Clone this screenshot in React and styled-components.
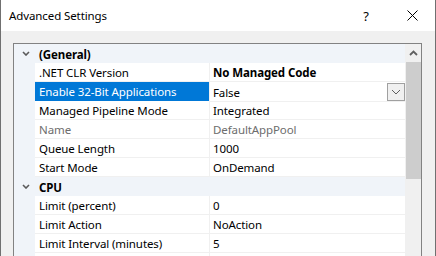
import React from "react";
import styled, { createGlobalStyle } from "styled-components";

const Global = createGlobalStyle`
  html, body { margin: 0; padding: 0; background: #f0f0f0; }
  * { box-sizing: border-box; }
`;

const FONT = `"Noto Sans", "Open Sans", sans-serif`;

const Window = styled.div`
  width: 436px;
  height: 256px;
  display: flex;
  flex-direction: column;
  overflow: hidden;
  border-left: 1px solid #707070;
  border-right: 1px solid #707070;
  font-family: ${FONT};
  font-size: 11.5px;
  letter-spacing: -0.1px;
  color: #000;
`;

const TitleBar = styled.div`
  height: 31px;
  flex: none;
  background: #fff;
  display: flex;
  align-items: center;
  padding-left: 8px;
`;

const Title = styled.div`
  flex: 1;
  padding-bottom: 1px;
`;

const TitleButton = styled.div`
  width: ${(p) => p.$w}px;
  height: 31px;
  display: flex;
  align-items: center;
  justify-content: center;
  font-size: 13px;
`;

const Body = styled.div`
  flex: 1;
  background: #f0f0f0;
  padding: 12px 13px 0 12px;
  overflow: hidden;
`;

const Grid = styled.div`
  border: 1px solid #828282;
  border-bottom: none;
  display: flex;
  height: 240px;
  background: #fff;
`;

const Rows = styled.div`
  flex: 1;
  display: flex;
  flex-direction: column;
`;

const Row = styled.div`
  display: grid;
  grid-template-columns: 21px 175px 1fr;
  height: 19px;
  flex: none;
`;

const Gutter = styled.div`
  background: #f0f4f9;
`;

const CategoryRow = styled.div`
  display: flex;
  align-items: center;
  height: 19px;
  flex: none;
  background: #f0f4f9;
`;

const CategoryToggle = styled.div`
  width: 21px;
  display: flex;
  justify-content: center;
  align-items: center;
  padding-left: 2px;
`;

const CategoryName = styled.div`
  font-weight: bold;
  padding-left: 4px;
  padding-top: 2px;
  line-height: 17px;
`;

const Label = styled.div`
  padding-left: 4px;
  padding-top: 1px;
  line-height: 17px;
  border-bottom: 1px solid #f0f0f0;
  border-right: 1px solid #f0f0f0;
  white-space: nowrap;
  overflow: hidden;
  background: ${(p) => (p.$selected ? "#0078d7" : "#fff")};
  color: ${(p) => (p.$selected ? "#fff" : p.$disabled ? "#6d6d6d" : "#000")};
`;

const Value = styled.div`
  padding-left: 3px;
  border-bottom: 1px solid #f0f0f0;
  white-space: nowrap;
  display: flex;
  align-items: center;
  justify-content: space-between;
  font-weight: ${(p) => (p.$bold ? "bold" : "normal")};
  color: ${(p) => (p.$disabled ? "#6d6d6d" : "#000")};
`;

const ValueText = styled.span`
  padding-top: 1px;
  line-height: 17px;
`;

const DropButton = styled.div`
  width: 18px;
  height: 18px;
  border: 1px solid #a0a0a0;
  background: #f0f0f0;
  display: flex;
  align-items: center;
  justify-content: center;
  margin-top: 1px;
`;

const ScrollBar = styled.div`
  width: 16px;
  flex: none;
  background: #f0f0f0;
  display: flex;
  flex-direction: column;
  align-items: center;
`;

const ScrollArrow = styled.div`
  height: 17px;
  width: 100%;
  display: flex;
  align-items: center;
  justify-content: center;
`;

const Thumb = styled.div`
  width: 15px;
  height: 117px;
  margin-top: 1px;
  background: #cdcdcd;
`;

const ChevronDown = ({ color = "#555", w = 7, h = 4, sw = 1.4 }) => (
  <svg width={w + 2} height={h + 2} viewBox={`0 0 ${w + 2} ${h + 2}`}>
    <polyline
      points={`1,1 ${(w + 2) / 2},${h + 1} ${w + 1},1`}
      fill="none"
      stroke={color}
      strokeWidth={sw}
    />
  </svg>
);

const ChevronUp = () => (
  <svg width="9" height="6" viewBox="0 0 9 6">
    <polyline points="1,5 4.5,1.5 8,5" fill="none" stroke="#606060" strokeWidth="1.8" />
  </svg>
);

const CloseIcon = () => (
  <svg width="11" height="11" viewBox="0 0 11 11">
    <line x1="0.5" y1="0.5" x2="10.5" y2="10.5" stroke="#000" strokeWidth="1" />
    <line x1="10.5" y1="0.5" x2="0.5" y2="10.5" stroke="#000" strokeWidth="1" />
  </svg>
);

const sections = [
  {
    name: "(General)",
    items: [
      { label: ".NET CLR Version", value: "No Managed Code", bold: true },
      { label: "Enable 32-Bit Applications", value: "False", selected: true },
      { label: "Managed Pipeline Mode", value: "Integrated" },
      { label: "Name", value: "DefaultAppPool", disabled: true },
      { label: "Queue Length", value: "1000" },
      { label: "Start Mode", value: "OnDemand" },
    ],
  },
  {
    name: "CPU",
    items: [
      { label: "Limit (percent)", value: "0" },
      { label: "Limit Action", value: "NoAction" },
      { label: "Limit Interval (minutes)", value: "5" },
      { label: "", value: "" },
    ],
  },
];

export default function App() {
  return (
    <>
      <Global />
      <Window>
        <TitleBar>
          <Title>Advanced Settings</Title>
          <TitleButton $w={46}>?</TitleButton>
          <TitleButton $w={46}>
            <CloseIcon />
          </TitleButton>
        </TitleBar>
        <Body>
          <Grid>
            <Rows>
              {sections.map((s) => (
                <React.Fragment key={s.name}>
                  <CategoryRow>
                    <CategoryToggle>
                      <ChevronDown color="#5a5a5a" w={6} h={3} sw={1.6} />
                    </CategoryToggle>
                    <CategoryName>{s.name}</CategoryName>
                  </CategoryRow>
                  {s.items.map((it, i) => (
                    <Row key={s.name + i}>
                      <Gutter />
                      <Label $selected={it.selected} $disabled={it.disabled}>
                        {it.label}
                      </Label>
                      <Value $bold={it.bold} $disabled={it.disabled}>
                        <ValueText>{it.value}</ValueText>
                        {it.selected && (
                          <DropButton>
                            <ChevronDown color="#606060" w={8} h={4} sw={1} />
                          </DropButton>
                        )}
                      </Value>
                    </Row>
                  ))}
                </React.Fragment>
              ))}
            </Rows>
            <ScrollBar>
              <ScrollArrow>
                <ChevronUp />
              </ScrollArrow>
              <Thumb />
            </ScrollBar>
          </Grid>
        </Body>
      </Window>
    </>
  );
}
